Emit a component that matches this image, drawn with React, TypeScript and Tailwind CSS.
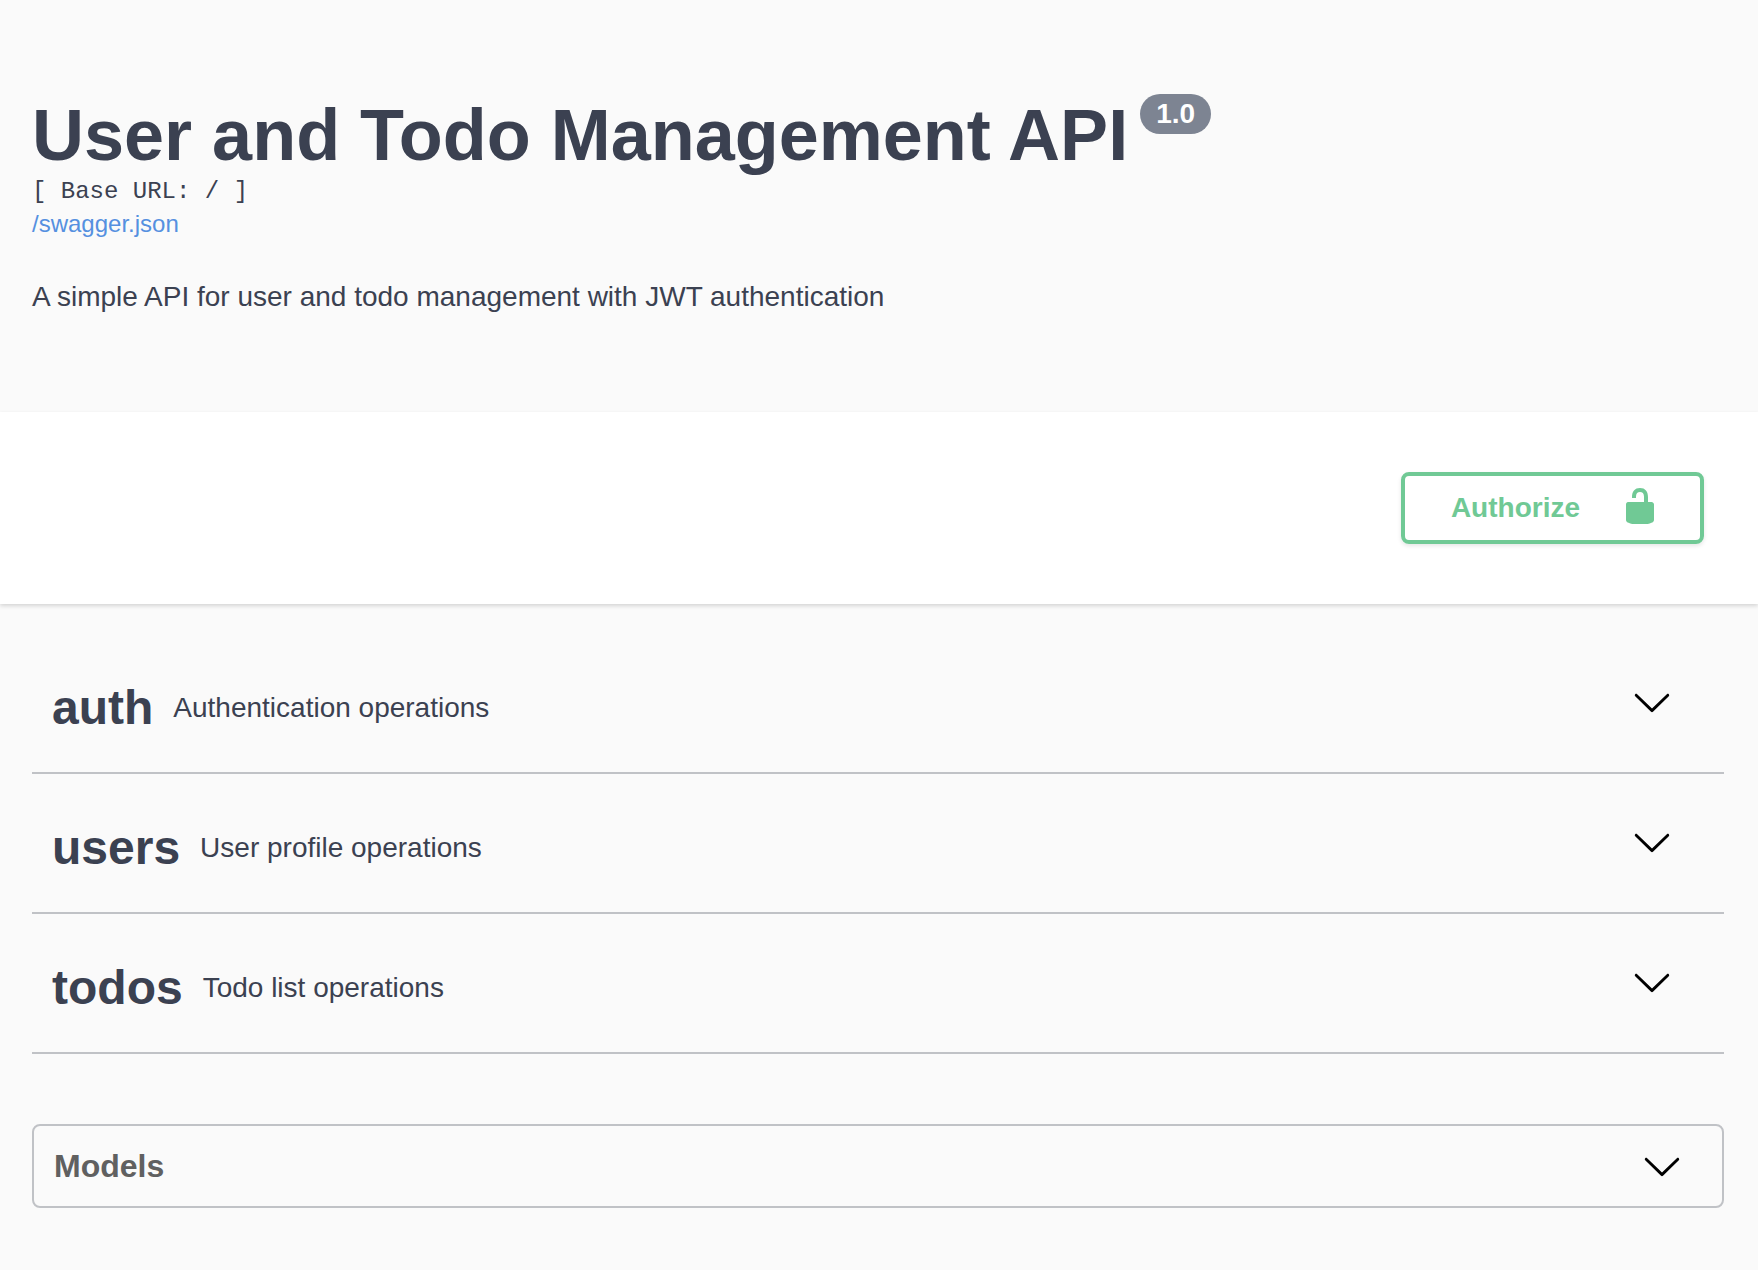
import { useState } from "react";

const tags = [
  { name: "auth", description: "Authentication operations" },
  { name: "users", description: "User profile operations" },
  { name: "todos", description: "Todo list operations" },
];

function Chevron({ open }: { open: boolean }) {
  return (
    <svg
      viewBox="0 0 20 20"
      className={open ? "size-10 shrink-0 rotate-180" : "size-10 shrink-0"}
      fill="#000"
      aria-hidden="true"
    >
      <path d="M17.418 6.109c.272-.268.709-.268.979 0s.271.701 0 .969l-7.908 7.83c-.27.268-.707.268-.979 0l-7.908-7.83c-.27-.268-.27-.701 0-.969.271-.268.709-.268.979 0L10 13.25l7.418-7.141z" />
    </svg>
  );
}

function UnlockedIcon() {
  return (
    <svg viewBox="0 0 20 20" className="mb-1 size-10 shrink-0" fill="currentColor" aria-hidden="true">
      <path d="M15.8 8H14V5.6C14 2.703 12.665 1 10 1 7.334 1 6 2.703 6 5.6V6h2v-.801C8 3.754 8.797 3 10 3c1.203 0 2 .754 2 2.199V8H4c-.553 0-1 .646-1 1.199V17c0 .549.428 1.139.951 1.307l1.197.387C5.672 18.861 6.55 19 7.1 19h5.8c.549 0 1.428-.139 1.951-.307l1.196-.387c.524-.167.953-.757.953-1.306V9.199C17 8.646 16.352 8 15.8 8z" />
    </svg>
  );
}

function TagSection({ name, description }: { name: string; description: string }) {
  const [open, setOpen] = useState(false);
  return (
    <h3 className="border-b-2 border-[#3b4151]/30">
      <button
        type="button"
        aria-expanded={open}
        onClick={() => setOpen(!open)}
        className="flex w-full cursor-pointer items-center gap-5 pt-[46px] pr-[52px] pb-9 pl-5 text-left"
      >
        <span className="text-5xl/14 font-bold">{name}</span>
        <span className="flex-1 text-[28px]/10">{description}</span>
        <span className="pb-3">
          <Chevron open={open} />
        </span>
      </button>
    </h3>
  );
}

export default function App() {
  const [modelsOpen, setModelsOpen] = useState(false);
  return (
    <div className="min-h-screen bg-[#fafafa] font-['Liberation_Sans',Arial,sans-serif] text-[#3b4151]">
      <header className="px-8 pt-[94px] pb-[95px]">
        <h1 className="flex items-start gap-3 text-7xl/[82px] font-bold">
          <span>User and Todo Management API</span>
          <span className="rounded-full bg-[#7d8492] px-4 text-[28px]/10 text-white">1.0</span>
        </h1>
        <p className="font-['Liberation_Mono',monospace] text-2xl/8">[ Base URL: / ]</p>
        <a href="/swagger.json" className="block w-fit text-2xl/8 text-[#5590e0]">
          /swagger.json
        </a>
        <p className="mt-[37px] text-[28px]/10">
          A simple API for user and todo management with JWT authentication
        </p>
      </header>

      <section className="flex justify-end bg-white py-15 pr-[54px] pl-8 shadow-[0_2px_4px_rgba(0,0,0,0.15)]">
        <button
          type="button"
          className="flex cursor-pointer items-center gap-10 rounded-lg border-4 border-[#70c995] py-2.5 pr-10 pl-[46px] text-[28px]/10 font-bold text-[#70c995] shadow-[0_2px_4px_rgba(0,0,0,0.1)]"
        >
          <span>Authorize</span>
          <UnlockedIcon />
        </button>
      </section>

      <main className="pt-[30px] pr-[34px] pb-15 pl-8">
        {tags.map((tag) => (
          <TagSection key={tag.name} name={tag.name} description={tag.description} />
        ))}

        <section className="mt-[70px] rounded-lg border-2 border-[#3b4151]/30">
          <h2>
            <button
              type="button"
              aria-expanded={modelsOpen}
              onClick={() => setModelsOpen(!modelsOpen)}
              className="flex w-full cursor-pointer items-center justify-between py-5 pr-10 pl-5 text-[32px]/10 font-bold text-[#606060]"
            >
              <span>Models</span>
              <Chevron open={modelsOpen} />
            </button>
          </h2>
        </section>
      </main>
    </div>
  );
}
